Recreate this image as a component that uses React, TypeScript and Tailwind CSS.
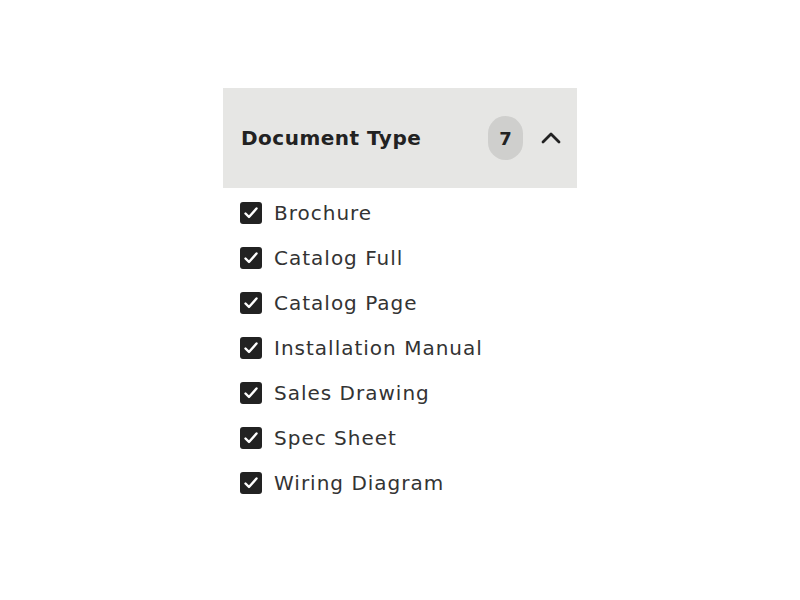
const types = [
  "Brochure",
  "Catalog Full",
  "Catalog Page",
  "Installation Manual",
  "Sales Drawing",
  "Spec Sheet",
  "Wiring Diagram",
];

function CheckBox() {
  return (
    <span className="flex h-[22px] w-[22px] items-center justify-center rounded-[3px] bg-[#222222]">
      <svg width="16" height="16" viewBox="0 0 16 16" fill="none">
        <path d="M2.5 8.5 L6 12 L13.5 3.5" stroke="white" strokeWidth="2.4" strokeLinecap="round" strokeLinejoin="round" />
      </svg>
    </span>
  );
}

export default function App() {
  return (
    <div className="min-h-[600px] w-[800px] bg-white pt-[88px] font-['DejaVu_Sans',sans-serif]">
      <div className="ml-[223px] w-[354px]">
        <div className="flex h-[100px] items-center bg-[#e6e6e4] pl-[18px] pr-[15px]">
          <h3 className="flex-1 text-[20px] font-bold tracking-[0.5px] text-[#222]">Document Type</h3>
          <span className="flex h-[44px] w-[35px] items-center justify-center rounded-full bg-[#cfcfcd] text-[18px] font-bold text-[#222]">
            7
          </span>
          <svg className="ml-[17px]" width="22" height="22" viewBox="0 0 22 22" fill="none">
            <path d="M3 15 L11 7 L19 15" stroke="#222" strokeWidth="2.8" strokeLinecap="round" strokeLinejoin="round" />
          </svg>
        </div>
        <ul className="pl-[17px] pt-[2px]">
          {types.map((t) => (
            <li key={t} className="flex h-[45px] items-center gap-[12px]">
              <CheckBox />
              <span className="text-[20px] tracking-[1px] text-[#333]">{t}</span>
            </li>
          ))}
        </ul>
      </div>
    </div>
  );
}
